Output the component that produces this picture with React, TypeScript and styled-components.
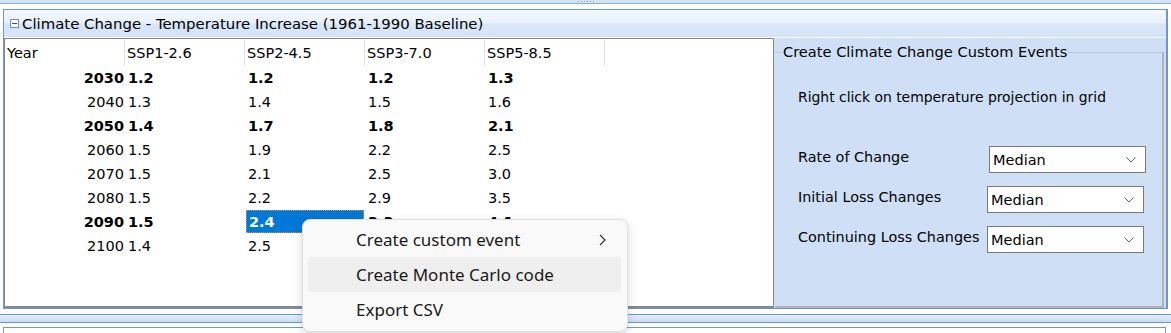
import styled, { createGlobalStyle } from "styled-components";

const GlobalStyle = createGlobalStyle`
    html, body {
        margin: 0;
        padding: 0;
        background: #ffffff;
        overflow: hidden;
    }
    body {
        font-family: "DejaVu Sans", Verdana, sans-serif;
        font-size: 14.5px;
        color: #000;
    }
`

const Page = styled.div`
    position: relative;
    width: 1171px;
    height: 333px;
    overflow: hidden;
`

const TopStrip = styled.div`
    height: 3px;
    background: #d3e2f6;
    border-bottom: 1px solid #8fb0de;
    margin-bottom: 5px;
    display: flex;
    justify-content: center;
    gap: 2px;
    span {
        width: 1px;
        height: 1px;
        margin-top: 1px;
        background: #8aa6cf;
    }
`

const Panel = styled.section`
    margin-left: 3px;
    width: 1162px;
    border: 1px solid #6b98d4;
    border-right-width: 2px;
`

const PanelHeader = styled.div`
    height: 27px;
    display: flex;
    align-items: center;
    gap: 3px;
    padding-left: 6px;
    background: linear-gradient(#f4f8fd 0%, #e9f1fb 45%, #d7e5f7 55%, #d5e4f7 100%);
    border-bottom: 1px solid #ffffff;
    font-size: 14.9px;
`

const Collapse = styled.span`
    position: relative;
    width: 7px;
    height: 7px;
    border: 1px solid #7d8ea6;
    background: #f5f8fc;
    &::after {
        content: "";
        position: absolute;
        left: 1px;
        top: 3px;
        width: 5px;
        height: 1px;
        background: #44505f;
    }
`

const PanelBody = styled.div`
    display: flex;
    height: 270px;
`

const Grid = styled.div`
    width: 768px;
    border: 1px solid #828790;
    border-bottom-width: 2px;
    background: #ffffff;
    display: flex;
    flex-direction: column;
`

const HeaderRow = styled.div`
    display: grid;
    grid-template-columns: repeat(5, 120px) 1fr;
    height: 27px;
`

const HeadCell = styled.div<{ $first?: boolean; $last?: boolean }>`
    display: flex;
    align-items: center;
    padding-left: 2px;
    border-right: ${p => p.$last ? "none" : "1px solid #e2e2e2"};
`

const Row = styled.div`
    display: grid;
    grid-template-columns: 120px repeat(4, 120px);
    height: 24px;
`

const YearCell = styled.div<{ $bold?: boolean }>`
    display: flex;
    align-items: center;
    justify-content: flex-end;
    padding-right: 1px;
    font-weight: ${p => p.$bold ? "bold" : "normal"};
`

const ValCell = styled.div<{ $bold?: boolean; $selected?: boolean }>`
    display: flex;
    align-items: center;
    padding-left: ${p => p.$selected ? "2px" : "3px"};
    font-weight: ${p => p.$bold ? "bold" : "normal"};
    ${p => p.$selected && `
        margin: 0 0 1px 1px;
        width: 118px;
        box-sizing: border-box;
        background: #0078d7;
        color: #ffffff;
        border: 1px dotted #e0913a;
    `}
`

const Side = styled.div`
    flex: 1;
    display: flex;
    background: #cfe0f6;
    padding: 5px 2px 0 1px;
`

const Group = styled.fieldset`
    flex: 1;
    min-width: 0;
    margin: 0;
    padding: 0;
    border: 1px solid #bfc6cf;
    border-left: none;
    border-right: 2px solid #b3b3b3;
    border-bottom: 2px solid #b3b3b3;
`

const Legend = styled.legend`
    margin-left: 7px;
    padding: 0 1px;
    font-size: 14.6px;
    line-height: 18px;
`

const GroupInner = styled.div`
    padding: 27px 0 0 23px;
`

const Hint = styled.div`
    font-size: 13.9px;
    line-height: 18px;
    margin-bottom: 40px;
`

const Form = styled.div`
    display: grid;
    grid-template-columns: 189px 157px;
    row-gap: 13px;
`

const Label = styled.div`
    line-height: 22px;
    font-size: 14.4px;
    white-space: nowrap;
`

const Select = styled.div<{ $shift?: number }>`
    margin-left: ${p => p.$shift || 0}px;
    height: 27px;
    box-sizing: border-box;
    width: 157px;
    background: #ffffff;
    border: 1px solid #7a7a7a;
    display: flex;
    align-items: center;
    justify-content: space-between;
    padding: 0 9px 0 3px;
    font-size: 14.5px;
`

const Splitter = styled.div`
    margin-top: 5px;
    height: 7px;
    border-top: 1px solid #6b98d4;
    border-bottom: 1px solid #6b98d4;
    background: linear-gradient(#e3eefb, #c8dcf6);
`

const NextPanel = styled.div`
    margin: 4px 0 0 3px;
    width: 1161px;
    height: 20px;
    border: 1px solid #6b98d4;
    border-bottom: none;
`

const Menu = styled.div`
    position: absolute;
    left: 302px;
    top: 219px;
    width: 326px;
    box-sizing: border-box;
    padding: 2px 6px 4px 5px;
    background: #f9f9f9;
    border: 1px solid #e0e0e0;
    border-radius: 8px;
    box-shadow: 0 3px 10px rgba(0, 0, 0, 0.16);
    font-family: "Noto Sans", "Open Sans", sans-serif;
    font-size: 17px;
`

const MenuItem = styled.div<{ $hover?: boolean }>`
    height: 35px;
    display: flex;
    align-items: center;
    justify-content: space-between;
    padding: 0 15px 0 48px;
    border-radius: 4px;
    background: ${p => p.$hover ? "#efefef" : "transparent"};
    color: #1a1a1a;
`

const rows = [
    { year: "2030", bold: true, v: ["1.2", "1.2", "1.2", "1.3"] },
    { year: "2040", bold: false, v: ["1.3", "1.4", "1.5", "1.6"] },
    { year: "2050", bold: true, v: ["1.4", "1.7", "1.8", "2.1"] },
    { year: "2060", bold: false, v: ["1.5", "1.9", "2.2", "2.5"] },
    { year: "2070", bold: false, v: ["1.5", "2.1", "2.5", "3.0"] },
    { year: "2080", bold: false, v: ["1.5", "2.2", "2.9", "3.5"] },
    { year: "2090", bold: true, v: ["1.5", "2.4", "3.3", "4.1"] },
    { year: "2100", bold: false, v: ["1.4", "2.5", "3.6", "4.8"] },
];

function Chevron() {
    return (
        <svg width="10" height="6" viewBox="0 0 10 6">
            <polyline points="0.5,0.5 5,5 9.5,0.5" fill="none" stroke="#606060" strokeWidth="1" />
        </svg>
    );
}

function SubArrow() {
    return (
        <svg width="7" height="12" viewBox="0 0 7 12">
            <polyline points="1,1 6,6 1,11" fill="none" stroke="#333" strokeWidth="1.2" />
        </svg>
    );
}

export default function App() {
    return (
        <Page>
            <GlobalStyle />
            <TopStrip>
                <span /><span /><span /><span /><span /><span />
            </TopStrip>
            <Panel>
                <PanelHeader>
                    <Collapse />
                    Climate Change - Temperature Increase (1961-1990 Baseline)
                </PanelHeader>
                <PanelBody>
                    <Grid>
                        <HeaderRow>
                            <HeadCell $first>Year</HeadCell>
                            <HeadCell>SSP1-2.6</HeadCell>
                            <HeadCell>SSP2-4.5</HeadCell>
                            <HeadCell>SSP3-7.0</HeadCell>
                            <HeadCell>SSP5-8.5</HeadCell>
                            <HeadCell $last />
                        </HeaderRow>
                        {rows.map(r => (
                            <Row key={r.year}>
                                <YearCell $bold={r.bold}>{r.year}</YearCell>
                                {r.v.map((v, i) => (
                                    <ValCell key={i} $bold={r.bold} $selected={r.year === "2090" && i === 1}>{v}</ValCell>
                                ))}
                            </Row>
                        ))}
                    </Grid>
                    <Side>
                        <Group>
                            <Legend>Create Climate Change Custom Events</Legend>
                            <GroupInner>
                                <Hint>Right click on temperature projection in grid</Hint>
                                <Form>
                                    <Label>Rate of Change</Label>
                                    <Select $shift={2}>Median<Chevron /></Select>
                                    <Label>Initial Loss Changes</Label>
                                    <Select>Median<Chevron /></Select>
                                    <Label>Continuing Loss Changes</Label>
                                    <Select>Median<Chevron /></Select>
                                </Form>
                            </GroupInner>
                        </Group>
                    </Side>
                </PanelBody>
            </Panel>
            <Splitter />
            <NextPanel />
            <Menu>
                <MenuItem>Create custom event<SubArrow /></MenuItem>
                <MenuItem $hover>Create Monte Carlo code</MenuItem>
                <MenuItem>Export CSV</MenuItem>
            </Menu>
        </Page>
    );
}
